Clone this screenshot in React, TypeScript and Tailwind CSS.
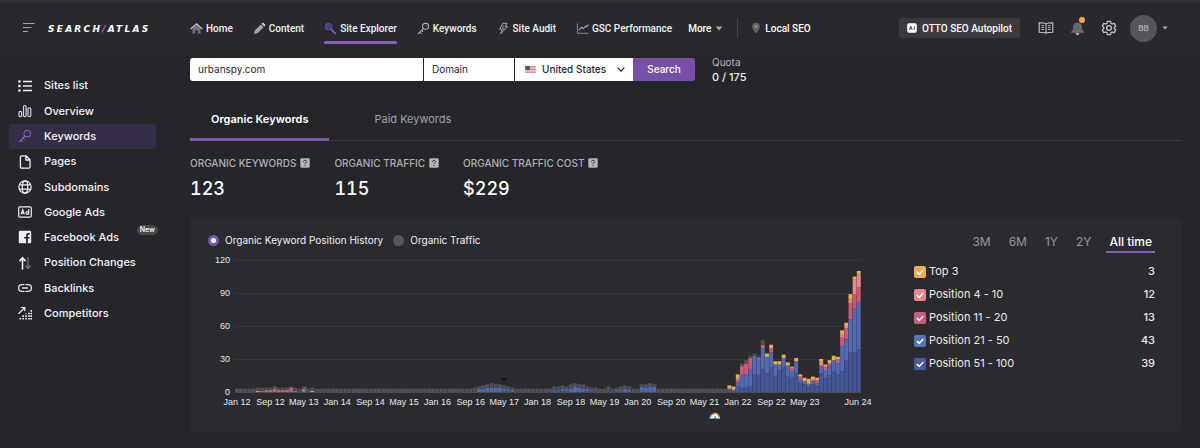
import React, { useState } from 'react';

type IconProps = { className?: string };

/* ---------- Icons ---------- */

const HomeIcon = ({ className }: IconProps) => (
  <svg className={className} viewBox="0 0 14 14" fill="none">
    <path d="M2.6 6.6 7 2.8l4.4 3.8v5.8H8.4V9.2H5.6v3.2h-3z" fill="#6f7075" />
    <path d="M1 7.2 7 1.9l6 5.3" stroke="#c4c4c7" strokeWidth="1.3" strokeLinecap="round" />
  </svg>
);

const PencilIcon = ({ className }: IconProps) => (
  <svg className={className} viewBox="0 0 14 14">
    <path d="M2.200 8.800 8.400 2.600l3 3L5.200 11.800l-4 1z" fill="#a3a4a8" />
    <path d="m9.100 1.900.9-.9c.4-.3.900-.3 1.200 0l1.800 1.800c.3.400.3.900 0 1.200l-.9.900z" fill="#d2d2d5" />
  </svg>
);

const ExplorerIcon = ({ className }: IconProps) => (
  <svg className={className} viewBox="0 0 14 14" fill="none">
    <circle cx="5" cy="5.2" r="3.400" fill="#4e3c86" stroke="#5b489b" strokeWidth="1.4" />
    <path d="m8 8.200 4.200 4.200" stroke="#7c68a8" strokeWidth="1.800" strokeLinecap="round" />
  </svg>
);

const KeyIcon = ({ className }: IconProps) => (
  <svg className={className} viewBox="0 0 14 14" fill="none" stroke="currentColor" strokeWidth="1.1" strokeLinecap="round" strokeLinejoin="round">
    <circle cx="9.3" cy="4.6" r="3.3" />
    <path d="M6.9 7 1.3 12.6M3 10.9l1.6 1.6M5 8.9l1.3 1.3" />
    <path d="M9.9 4h.1" />
  </svg>
);

const BoltIcon = ({ className }: IconProps) => (
  <svg className={className} viewBox="0 0 14 14" fill="none" stroke="#aeaeb2" strokeWidth="1" strokeLinejoin="round">
    <path d="M6.3 1.4h4.5L8.9 5h2.6L4 12.6l1.7-4.8H2.9z" />
    <path d="m7.6 3.2-2 3.2h2.2L6.9 8.6" strokeWidth=".7" />
  </svg>
);

const TrendIcon = ({ className }: IconProps) => (
  <svg className={className} viewBox="0 0 14 14" fill="none" strokeLinecap="round" strokeLinejoin="round">
    <path d="M1.5 2v10h11.5" stroke="#85868a" strokeWidth="1.1" />
    <path d="m3.5 8.6 2.3-3 2.1 1.6 2.4-2.6 1.2.6 1.4-2" stroke="#bcbcc0" strokeWidth="1.1" />
  </svg>
);

const PinIcon = ({ className }: IconProps) => (
  <svg className={className} viewBox="0 0 14 14">
    <path d="M7 1a4.4 4.4 0 0 0-4.4 4.4C2.6 8.6 7 13.2 7 13.2s4.4-4.600 4.400-7.800A4.400 4.400 0 0 0 7 1z" fill="#626368" />
    <circle cx="7" cy="5.3" r="1.7" fill="#a3a3a7" />
    <circle cx="7" cy="5.3" r=".7" fill="#37383c" />
  </svg>
);

const Caret = ({ className }: IconProps) => (
  <svg className={className} viewBox="0 0 8 5" fill="#a9a9ad">
    <path d="M.6.6h6.8L4 4.4z" />
  </svg>
);

const MenuIcon = ({ className }: IconProps) => (
  <svg className={className} viewBox="0 0 12 12" stroke="#a3a4a6" strokeWidth="1.1">
    <path d="M0 1.500h11.500M0 5.500h8.500M0 9.500h5" />
  </svg>
);

const AiIcon = ({ className }: IconProps) => (
  <svg className={className} viewBox="0 0 10 10" fill="none">
    <rect x=".2" y=".2" width="9.6" height="9.6" rx="2" fill="#fff" />
    <path d="m2.3 6.8 1.5-3.6 1.5 3.6M2.9 5.7h1.8M7.3 3.2v3.6" stroke="#34353a" strokeWidth=".9" />
  </svg>
);

const BookIcon = ({ className }: IconProps) => (
  <svg className={className} viewBox="0 0 16 14" fill="none" stroke="#c6c6c9" strokeWidth="1.1" strokeLinejoin="round">
    <path d="M8 2.800C7 2 5.500 1.800 1.200 1.800v9.400C5.500 11.200 7 11.500 8 12.300c1-.8 2.500-1.100 6.800-1.100V1.800C10.500 1.800 9 2 8 2.800zM8 2.800v9.500" />
    <path d="M3.300 4.600h2.600M3.300 6.600h2.600M3.300 8.600h2.600M10.100 4.600h2.600M10.100 6.600h2.600M10.100 8.600h2.600" strokeWidth=".9" />
  </svg>
);

const BellIcon = ({ className }: IconProps) => (
  <svg className={className} viewBox="0 0 14 14">
    <path d="M7 1.300c-2.600 0-4.200 1.900-4.200 4.200 0 2.800-.6 3.700-1.700 4.900h11.800c-1.100-1.200-1.700-2.100-1.700-4.900 0-2.300-1.600-4.200-4.200-4.200z" fill="#66676b" />
    <path d="M1 10.400h12" stroke="#7d7e82" strokeWidth=".8" />
    <path d="M5.300 11.400h3.400a1.700 1.700 0 0 1-3.400 0z" fill="#cfcfd2" />
  </svg>
);

const GearIcon = ({ className }: IconProps) => (
  <svg className={className} viewBox="0 0 24 24" fill="none" stroke="#c6c6c9" strokeWidth="1.900" strokeLinejoin="round">
    <path d="M9.700 2h4.600l.7 3 1.800 1 3-.9 2.300 4-2.300 2v1.800l2.300 2-2.300 4-3-.9-1.800 1-.7 3H9.700L9 19l-1.800-1-3 .9-2.300-4 2.300-2v-1.800l-2.300-2 2.300-4 3 .9L9 5z" />
    <circle cx="12" cy="12" r="3.600" />
  </svg>
);

const ListIcon = ({ className }: IconProps) => (
  <svg className={className} viewBox="0 0 14 14" stroke="#f0f0f2" strokeWidth="1.300" fill="#f0f0f2">
    <path d="M5 2.500h9M5 7h9M5 11.500h9" />
    <g stroke="none">
      <rect x=".2" y="1.300" width="2.500" height="2.500" rx=".8" />
      <rect x=".2" y="5.800" width="2.500" height="2.500" rx=".8" />
      <rect x=".2" y="10.300" width="2.500" height="2.500" rx=".8" />
    </g>
  </svg>
);

const BarsIcon = ({ className }: IconProps) => (
  <svg className={className} viewBox="0 0 14 14" fill="none" stroke="#d5d5d8" strokeWidth="1.200">
    <rect x="1" y="7.300" width="2.600" height="5.300" rx="1.200" />
    <rect x="5.500" y="1.500" width="2.600" height="11.100" rx="1.200" />
    <rect x="10" y="3.800" width="2.800" height="8.800" rx="1.200" />
  </svg>
);

const PageIcon = ({ className }: IconProps) => (
  <svg className={className} viewBox="0 0 14 14" fill="none" stroke="#f0f0f2" strokeWidth="1.300" strokeLinejoin="round">
    <path d="M3.500.8H8l4 4v7.300c0 .6-.5 1.100-1.100 1.100H3.500c-.6 0-1.100-.5-1.100-1.100V1.900C2.400 1.300 2.900.8 3.500.8zM7.900 1v4H12" />
  </svg>
);

const GlobeIcon = ({ className }: IconProps) => (
  <svg className={className} viewBox="0 0 14 14" fill="none" stroke="#f0f0f2" strokeWidth="1.200">
    <circle cx="7" cy="7" r="6.200" />
    <ellipse cx="7" cy="7" rx="2.800" ry="6.200" />
    <path d="M1.300 4.900h11.400M1.300 9.100h11.400" />
  </svg>
);

const AdIcon = ({ className }: IconProps) => (
  <svg className={className} viewBox="0 0 14 14" fill="none" stroke="#f0f0f2" strokeWidth="1.200">
    <rect x=".7" y="1.800" width="12.600" height="10.400" rx="1.200" />
    <path d="m3 9.400 1.700-4.600 1.700 4.600M3.600 8.200h2.200M10.700 4.300v5.200" />
    <circle cx="9.400" cy="7.900" r="1.300" />
  </svg>
);

const FacebookIcon = ({ className }: IconProps) => (
  <svg className={className} viewBox="0 0 14 14">
    <rect x=".8" y=".8" width="12.400" height="12.400" rx="1.200" fill="#f0f0f2" />
    <path d="M8.100 13.200V8.600h-2V6.900h2V5.500c0-1.600 1-2.400 2.400-2.400h1.200v1.600h-.9c-.7 0-.9.4-.9 1v1.200h1.800l-.3 1.700H9.900v4.600z" fill="#25262a" />
  </svg>
);

const ArrowsIcon = ({ className }: IconProps) => (
  <svg className={className} viewBox="0 0 14 14" fill="none" strokeWidth="1.600" strokeLinecap="round" strokeLinejoin="round">
    <path d="M4.500 13V1.800M1.900 4.600l2.600-2.900 2.600 2.900" stroke="#f5f5f6" />
    <path d="M9.900 1.500v10.800M7.800 10l2.100 2.500 2.300-2.500" stroke="#77787c" strokeWidth="1.200" />
  </svg>
);

const LinkIcon = ({ className }: IconProps) => (
  <svg className={className} viewBox="0 0 14 14" fill="none" stroke="#e4e4e6" strokeWidth="1.300" strokeLinecap="round">
    <path d="M6 3.600H4a3.400 3.400 0 0 0 0 6.800h2M8 3.600h2a3.400 3.400 0 0 1 0 6.800H8M4.400 7h5.200" />
  </svg>
);

const CompetitorsIcon = ({ className }: IconProps) => (
  <svg className={className} viewBox="0 0 14 14" fill="none" stroke="#f0f0f2">
    <path d="M.5 7.800 6.400 2M2.800 1.500h4v3.800" strokeWidth="1.200" />
    <g strokeWidth="1.600" strokeDasharray="1.600 1">
      <path d="M2.300 13.500v-2M5.200 13.500V8.600M8.100 13.500V7.400M11 13.500V6.200M13.200 13.500V3" />
    </g>
  </svg>
);

const HelpIcon = ({ className }: IconProps) => (
  <svg className={className} viewBox="0 0 10 10" fill="none">
    <rect x=".3" y=".3" width="9.400" height="9.400" rx="1.200" fill="#b4b4b7" />
    <path d="M3.500 3.900c0-.9.600-1.500 1.500-1.500s1.500.6 1.500 1.300c0 1-1.500 1.100-1.500 2.100M5 6.900v1" stroke="#2a2b2f" strokeWidth="1" />
  </svg>
);

const FlagIcon = ({ className }: IconProps) => (
  <svg className={className} viewBox="0 0 12 8">
    <rect width="12" height="8" fill="#f3dfe3" />
    <path d="M0 .6h12M0 2.300h12M0 4h12M0 5.700h12M0 7.400h12" stroke="#d5637a" strokeWidth=".8" />
    <rect width="5.400" height="4.400" fill="#46508a" />
  </svg>
);

/* ---------- Data ---------- */

const NAV = [
  { label: 'Home', Icon: HomeIcon },
  { label: 'Content', Icon: PencilIcon },
  { label: 'Site Explorer', Icon: ExplorerIcon, active: true },
  { label: 'Keywords', Icon: KeyIcon },
  { label: 'Site Audit', Icon: BoltIcon },
  { label: 'GSC Performance', Icon: TrendIcon },
];

const SIDEBAR = [
  { label: 'Sites list', Icon: ListIcon },
  { label: 'Overview', Icon: BarsIcon },
  { label: 'Keywords', Icon: KeyIcon, active: true },
  { label: 'Pages', Icon: PageIcon },
  { label: 'Subdomains', Icon: GlobeIcon },
  { label: 'Google Ads', Icon: AdIcon },
  { label: 'Facebook Ads', Icon: FacebookIcon, badge: 'New' },
  { label: 'Position Changes', Icon: ArrowsIcon },
  { label: 'Backlinks', Icon: LinkIcon },
  { label: 'Competitors', Icon: CompetitorsIcon },
];

const STATS = [
  { label: 'ORGANIC KEYWORDS', value: '123' },
  { label: 'ORGANIC TRAFFIC', value: '115' },
  { label: 'ORGANIC TRAFFIC COST', value: '$229' },
];

const POSITIONS = [
  { label: 'Top 3', value: 3, color: 'bg-[#eeae4e]' },
  { label: 'Position 4 - 10', value: 12, color: 'bg-[#e98590]' },
  { label: 'Position 11 - 20', value: 13, color: 'bg-[#cf5a80]' },
  { label: 'Position 21 - 50', value: 43, color: 'bg-[#5a72bd]' },
  { label: 'Position 51 - 100', value: 39, color: 'bg-[#46589f]' },
];

const PERIODS = ['3M', '6M', '1Y', '2Y', 'All time'];

// 51-100, 21-50, 11-20, 4-10, top 3, not tracked
const SERIES_COLORS = ['#445698', '#5269b4', '#cd5877', '#e58a91', '#e9ab4c', '#505156'];

// Monthly counts, Nov 21 - Jun 24
const RECENT: number[][] = [
  [2, 1, 0, 0, 3, 0], [1, 1, 0, 0, 3, 0], [5, 4, 2, 1, 4, 0], [4, 12, 8, 0, 0, 2],
  [4, 12, 10, 0, 0, 3], [5, 16, 10, 0, 0, 2], [16, 17, 0, 0, 0, 2], [15, 15, 1, 0, 0, 2],
  [21, 19, 3, 0, 0, 4], [17, 15, 0, 0, 3, 0], [22, 14, 4, 0, 3, 0], [14, 11, 0, 0, 3, 0],
  [20, 5, 0, 0, 3, 0], [22, 9, 0, 0, 3, 0], [14, 10, 0, 0, 3, 0], [13, 6, 3, 0, 1, 0],
  [17, 11, 0, 0, 3, 0], [8, 3, 3, 0, 2, 0], [7, 3, 0, 0, 3, 0], [5, 2, 0, 1, 4, 0],
  [7, 3, 1, 0, 3, 0], [6, 2, 3, 0, 2, 0], [17, 6, 1, 4, 2, 0], [13, 7, 3, 0, 2, 0],
  [15, 9, 2, 0, 3, 0], [19, 10, 0, 0, 4, 0], [16, 10, 4, 0, 2, 0], [19, 23, 8, 2, 4, 0],
  [29, 19, 10, 2, 3, 0], [36, 30, 15, 3, 5, 0], [36, 40, 13, 13, 3, 0], [39, 43, 13, 12, 3, 0],
];

// Months before Nov 21 with more than the flat baseline: index -> counts
const EARLY: Record<number, number[]> = {
  5: [0, 0, 0, 1, 0, 3], 6: [0, 0, 1, 0, 0, 3], 7: [0, 0, 2, 0, 0, 2], 8: [0, 0, 2, 0, 0, 2], 9: [0, 0, 3, 0, 0, 2],
  10: [0, 0, 2, 0, 0, 2], 11: [0, 0, 2, 0, 0, 2], 12: [0, 0, 2, 0, 0, 2], 13: [0, 0, 4, 0, 0, 1],
  14: [0, 0, 1, 0, 0, 3], 16: [0, 0, 3, 0, 0, 2], 18: [0, 0, 0, 1, 0, 3],
  57: [0, 0, 0, 0, 0, 4], 58: [0, 3, 0, 0, 0, 2], 59: [0, 3, 0, 0, 0, 3], 60: [0, 4, 0, 0, 0, 3], 61: [0, 4, 0, 0, 0, 4],
  62: [0, 4, 0, 0, 0, 3], 63: [0, 4, 0, 0, 0, 3], 64: [1, 2, 0, 0, 0, 3], 65: [1, 2, 0, 0, 0, 2], 66: [0, 2, 0, 0, 0, 2],
  76: [1, 1, 0, 0, 0, 3], 77: [1, 1, 0, 0, 0, 3], 78: [1, 2, 0, 0, 0, 3], 79: [1, 2, 0, 0, 0, 2], 80: [0, 3, 0, 0, 0, 4],
  81: [0, 5, 0, 0, 0, 3], 82: [0, 4, 0, 0, 0, 3], 83: [0, 3, 0, 0, 0, 4], 84: [1, 2, 0, 0, 0, 2], 85: [1, 1, 0, 0, 0, 2],
  86: [1, 0, 0, 0, 0, 3], 89: [1, 0, 0, 0, 0, 4], 91: [1, 1, 0, 0, 0, 2], 92: [1, 1, 0, 0, 0, 3], 93: [0, 3, 0, 0, 0, 3],
  94: [0, 2, 0, 0, 0, 3], 97: [0, 5, 0, 0, 0, 2], 98: [0, 4, 0, 0, 0, 3], 99: [0, 5, 0, 0, 0, 3], 100: [0, 5, 0, 0, 0, 2],
};

const MONTHS: number[][] = [
  ...Array.from({ length: 118 }, (_, i) => EARLY[i] ?? [0, 0, 0, 0, 0, 3]),
  ...RECENT,
];

const X_LABELS = [
  'Jan 12', 'Sep 12', 'May 13', 'Jan 14', 'Sep 14', 'May 15', 'Jan 16', 'Sep 16', 'May 17',
  'Jan 18', 'Sep 18', 'May 19', 'Jan 20', 'Sep 20', 'May 21', 'Jan 22', 'Sep 22', 'May 23',
];

/* ---------- Blocks ---------- */

const Header = () => (
  <header className="flex h-14 items-center border-t-2 border-[#303135] bg-[#28292d] pb-[2px] font-['Roboto',sans-serif] text-[10px] font-medium text-white">
    <div className="flex w-[190px] shrink-0 items-center gap-[13px] pl-[23px]">
      <button aria-label="Toggle menu"><MenuIcon className="size-3" /></button>
      <a href="#" className="pt-1 font-['DejaVu_Sans'] text-[9px] font-bold whitespace-nowrap italic tracking-[0.25em]">
        SEARCH<span className="text-[#8b7be0]">/</span>ATLAS
      </a>
    </div>
    <nav className="flex items-center gap-5">
      {NAV.map(({ label, Icon, active }) => (
        <a key={label} href="#" className="relative flex h-8 items-center gap-[3px] whitespace-nowrap text-[#f1f1f3]">
          <Icon className="size-[13px] text-[#b9b9bd]" />
          {label}
          {active && <span className="absolute inset-x-0 bottom-0 h-[3px] rounded-full bg-[#8a5cc0]"></span>}
        </a>
      ))}
      <button className="-ml-1 flex items-center gap-1">More <Caret className="h-[5px] w-2" /></button>
    </nav>
    <span className="mr-3 ml-[14px] h-5 w-px bg-[#424348]"></span>
    <a href="#" className="flex items-center gap-[3px] whitespace-nowrap"><PinIcon className="size-3" /> Local SEO</a>
    <div className="ml-auto flex items-center pr-8">
      <button className="flex h-5 items-center gap-[5px] rounded-xs bg-[#3a3b3f] px-2 whitespace-nowrap">
        <AiIcon className="size-[10px]" /> OTTO SEO Autopilot
      </button>
      <button aria-label="Docs" className="ml-[18px]"><BookIcon className="h-[14px] w-4" /></button>
      <button aria-label="Notifications" className="relative ml-4">
        <BellIcon className="size-[15px]" />
        <span className="absolute -top-1 right-0 size-[6px] rounded-full bg-[#eeaa45]"></span>
      </button>
      <button aria-label="Settings" className="ml-4"><GearIcon className="size-4" /></button>
      <button className="ml-[13px] flex items-center gap-[5px]">
        <span className="flex size-[27px] items-center justify-center rounded-full bg-[#55565a] font-['Inter'] text-[8px] font-bold text-[#a5a5a8]">BB</span>
        <Caret className="h-1 w-[6px]" />
      </button>
    </div>
  </header>
);

const Sidebar = () => (
  <aside className="w-[190px] shrink-0 pt-[17px] pl-[9px]">
    <nav className="grid h-[253px] w-[147px] auto-rows-fr text-[11px] font-medium text-[#f3f3f5]">
      {SIDEBAR.map(({ label, Icon, active, badge }) => (
        <a
          key={label}
          href="#"
          className={`relative flex items-center gap-3 rounded-xs pl-[9px] whitespace-nowrap ${active ? 'bg-[#342d45]' : ''}`}
        >
          <Icon className={`size-[14px] ${active ? 'text-[#8360b4]' : ''}`} />
          {label}
          {badge && (
            <span className="absolute top-0 -right-[2px] rounded-full bg-[#47484d] px-[3px] text-[7px] leading-[10px] font-semibold">{badge}</span>
          )}
        </a>
      ))}
    </nav>
  </aside>
);

const SearchBar = () => (
  <div className="flex items-center pt-[2px] text-[10px]">
    <form className="flex h-[23px] gap-px text-[#26272b]" onSubmit={e => e.preventDefault()}>
      <input aria-label="Site" defaultValue="urbanspy.com" className="w-[233px] rounded-l-[3px] bg-white px-2 outline-none" />
      <select aria-label="Scope" className="w-[90px] appearance-none bg-white px-2 outline-none">
        <option>Domain</option>
      </select>
      <div className="flex">
        <div className="relative">
          <select aria-label="Country" className="h-full w-[118px] appearance-none bg-white pl-[27px] font-medium outline-none">
            <option>United States</option>
          </select>
          <FlagIcon className="pointer-events-none absolute top-2 left-[10px] h-[7px] w-[11px]" />
          <svg className="pointer-events-none absolute top-[9px] right-2 h-[5px] w-2" viewBox="0 0 8 5" fill="none" stroke="#26272b" strokeWidth="1.200">
            <path d="m.7.7 3.300 3.500L7.300.7" />
          </svg>
        </div>
        <button className="w-[62px] rounded-r-[3px] bg-[#784fa7] font-medium text-white">Search</button>
      </div>
    </form>
    <div className="-my-2 ml-[17px] leading-[15px]">
      <p className="text-[#b4b4b7]">Quota</p>
      <p className="text-[11px] font-medium text-[#ededef]">0 / 175</p>
    </div>
  </div>
);

const HistoryChart = () => {
  const left = 27;
  const base = 144;
  const step = 626 / 150;

  return (
    <svg className="block w-full" viewBox="0 0 670 179" role="img" aria-label="Organic Keyword Position History">
      {[0, 30, 60, 90, 120].map(v => (
        <g key={v}>
          <path d={`M${left} ${base - v * 1.1 + 0.5}H653`} stroke={v ? '#35363a' : '#4b4c50'} />
          <text x="22" y={base - v * 1.1 + 3} textAnchor="end" className="fill-[#e6e6e8] font-['Liberation_Sans'] text-[9px]">{v}</text>
        </g>
      ))}
      {MONTHS.map((counts, i) => {
        let y = base;
        return counts.map((count, s) => {
          if (!count) return null;
          const h = count * 1.1;
          y -= h;
          return <rect key={`${i}-${s}`} x={left + i * step} y={y} width={3.9} height={h} fill={SERIES_COLORS[s]} />;
        });
      })}
      <path d="M66 140h3M82 140h3M96 140h3" stroke="#3c8d80" />
      <path d="M293 130h6l-1.500 3h-3z" fill="#18191c" />
      {X_LABELS.map((label, i) => (
        <text key={label} x={left + 2 + i * 33.4} y="157" textAnchor="middle" className="fill-[#e6e6e8] font-['Liberation_Sans'] text-[9px]">{label}</text>
      ))}
      <text x="650" y="157" textAnchor="middle" className="fill-[#e6e6e8] font-['Liberation_Sans'] text-[9px]">Jun 24</text>
      {/* search update marker */}
      <g transform="translate(2 1)">
        <path d="M499.500 169.500a5.300 5.300 0 0 1 10.600 0z" fill="#fff" />
        <g fill="none" strokeWidth="1.400">
          <path d="M500.300 168.500a4.500 4.500 0 0 1 1.700-3" stroke="#4b83e8" />
          <path d="M502 165.500a4.500 4.500 0 0 1 2.800-1" stroke="#e35b4e" />
          <path d="M504.800 164.500a4.500 4.500 0 0 1 2.800 1" stroke="#edbb45" />
          <path d="M507.600 165.500a4.500 4.500 0 0 1 1.700 3" stroke="#48a565" />
          <path d="m504.400 169.300 1.500-1.800" stroke="#3f6fc8" strokeWidth="1.200" />
        </g>
      </g>
    </svg>
  );
};

const HistoryCard = () => {
  const [metric, setMetric] = useState('positions');
  const [period, setPeriod] = useState('All time');

  const radioClass = 'size-[11px] appearance-none rounded-full bg-[#56575b] checked:border-[3px] checked:border-[#7456ac] checked:bg-white';

  return (
    <section className="mt-4 flex justify-between rounded-sm bg-[#2a2b2f] pt-[15px] pr-[26px] pb-[5px] pl-[18px]">
      <div className="max-w-[670px] min-w-0 flex-1">
        <div className="flex h-4 items-center gap-[10px] text-[10px] text-[#f0f0f2]">
          <label className="flex items-center gap-[6px]">
            <input type="radio" name="metric" className={radioClass} checked={metric === 'positions'} onChange={() => setMetric('positions')} />
            Organic Keyword Position History
          </label>
          <label className="flex items-center gap-[6px]">
            <input type="radio" name="metric" className={radioClass} checked={metric === 'traffic'} onChange={() => setMetric('traffic')} />
            Organic Traffic
          </label>
        </div>
        <HistoryChart />
      </div>
      <div className="w-[241px] shrink-0">
        <div className="flex justify-end gap-3 text-[12px] text-[#97989c]">
          {PERIODS.map(p => (
            <button
              key={p}
              onClick={() => setPeriod(p)}
              className={`border-b-2 px-[3px] leading-[19px] ${p === period ? 'border-[#8560bb] font-medium text-white' : 'border-transparent'}`}
            >
              {p}
            </button>
          ))}
        </div>
        <ul className="mt-[7px] text-[11px] text-[#e9e9eb]">
          {POSITIONS.map(({ label, value, color }) => (
            <li key={label} className="flex h-[23px] items-center justify-between">
              <label className="flex items-center gap-[3px]">
                <span className="relative flex">
                  <input type="checkbox" defaultChecked className={`peer size-3 appearance-none rounded-xs ${color}`} />
                  <svg className="pointer-events-none absolute inset-0 hidden size-3 peer-checked:block" viewBox="0 0 11 11" fill="none" stroke="#fff" strokeWidth="1.400">
                    <path d="m2.700 5.600 2.100 2.100 3.700-4" />
                  </svg>
                </span>
                {label}
              </label>
              <span className="font-medium">{value}</span>
            </li>
          ))}
        </ul>
      </div>
    </section>
  );
};

const App: React.FC = () => {
  const [tab, setTab] = useState('Organic Keywords');

  return (
    <div className="min-h-screen bg-[#25262a] font-['Inter',sans-serif] text-white">
      <Header />
      <div className="flex">
        <Sidebar />
        <main className="min-w-0 flex-1 pr-[19px] pb-4">
          <SearchBar />
          <div className="mt-4 flex gap-6 border-b border-[#3b3c40] text-[11px]">
            {['Organic Keywords', 'Paid Keywords'].map(t => (
              <button
                key={t}
                onClick={() => setTab(t)}
                className={`-mb-px h-11 border-b-[3px] px-[21px] pt-[3px] ${t === tab ? 'border-[#7f59b0] font-semibold text-white' : 'border-transparent text-[#a2a2a6]'}`}
              >
                {t}
              </button>
            ))}
          </div>
          <div className="mt-[14px] flex gap-6">
            {STATS.map(({ label, value }) => (
              <div key={label}>
                <p className="flex items-center gap-1 text-[10px] leading-4 font-medium text-[#aeaeb2]">
                  {label}
                  <HelpIcon className="size-[10px]" />
                </p>
                <p className="mt-[6px] text-[18px] leading-6 font-medium tabular-nums">{value}</p>
              </div>
            ))}
          </div>
          <HistoryCard />
        </main>
      </div>
    </div>
  );
};

export default App;
